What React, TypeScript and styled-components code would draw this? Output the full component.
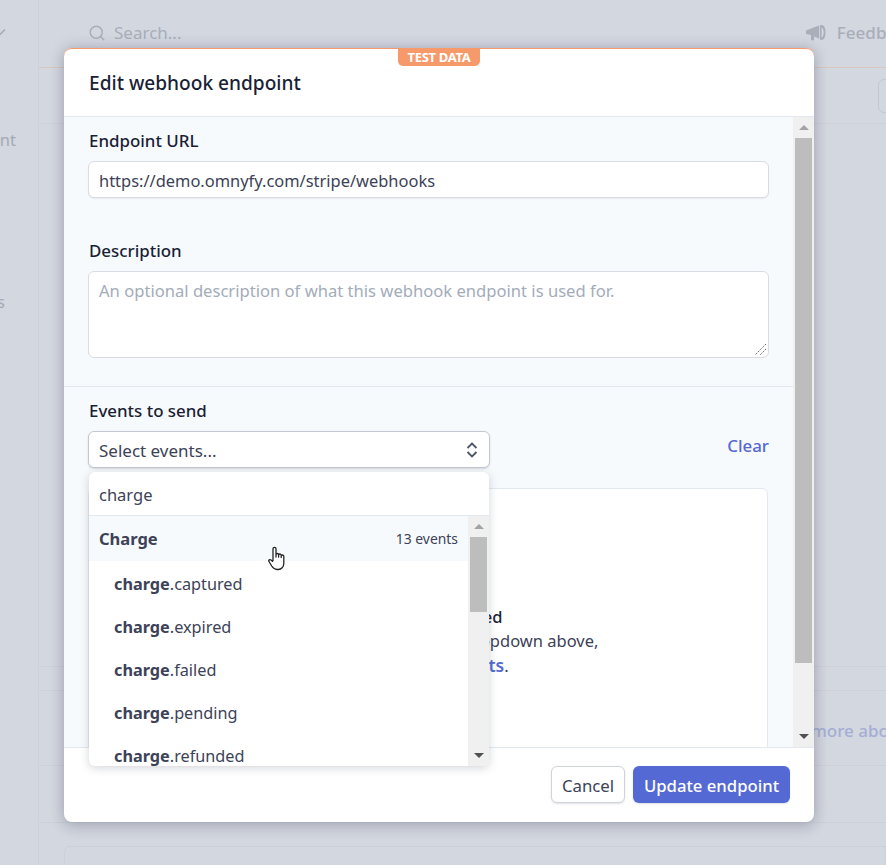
import { Search } from "lucide-react";
import styled, { createGlobalStyle } from "styled-components";

const GlobalStyle = createGlobalStyle`
    html, body {
        margin: 0;
        padding: 0;
        height: 100%;
        overflow: hidden;
        background: #d3d7df;
    }
    * {
        box-sizing: border-box;
    }
    body {
        font-family: "Noto Sans", "Open Sans", sans-serif;
        font-size: 16.5px;
        color: #3c4257;
    }
`

const Page = styled.div`
    position: relative;
    width: 886px;
    height: 865px;
    display: flex;
    overflow: hidden;
    background: #d3d7df;
`

// greyed page behind the dialog
const Sidebar = styled.nav`
    width: 39px;
    flex: none;
    border-right: 1px solid #cdd2da;
    overflow: hidden;
    color: #a5a9b5;
    display: flex;
    flex-direction: column;
    align-items: flex-end;
`
const SideChevron = styled.svg`
    flex: none;
    margin: 28px 32px 0 0;
`
const SideItem = styled.div<{ $top: number; $right: number }>`
    margin-top: ${p => p.$top}px;
    padding-right: ${p => p.$right}px;
    height: 24px;
    line-height: 24px;
    white-space: nowrap;
`
const Main = styled.div`
    flex: 1;
    min-width: 0;
    display: flex;
    flex-direction: column;
`
const TopBar = styled.header`
    height: 68px;
    flex: none;
    border-bottom: 1px solid #d9c6bf;
    display: flex;
    align-items: center;
    justify-content: space-between;
    padding: 0 0 2px 49px;
    color: #a9aeb9;
    font-size: 17px;
    white-space: nowrap;
`
const SearchBox = styled.div`
    display: flex;
    align-items: center;
    gap: 8px;
`
const Feedback = styled.div`
    display: flex;
    align-items: center;
    gap: 11px;
    margin-right: -28px;
    font-weight: 500;
`
const BackRow = styled.div<{ $height: number; $line?: boolean }>`
    height: ${p => p.$height}px;
    flex: none;
    display: flex;
    align-items: center;
    justify-content: flex-end;
    border-bottom: ${p => (p.$line ? "1px solid #cbd0d9" : "none")};
    white-space: nowrap;
    overflow: hidden;
`
const BackButton = styled.div`
    width: 30px;
    height: 34px;
    margin-right: -22px;
    border: 1px solid #c3c8d1;
    border-radius: 6px;
`
const BackLink = styled.span`
    color: #a4aed4;
    font-size: 17px;
    font-weight: 500;
    margin-right: -20px;
    padding-top: 4px;
`
const BackCard = styled.div`
    margin: 23px 0 0 25px;
    height: 40px;
    border: 1px solid #cbd0d9;
    border-bottom: none;
    border-radius: 6px 0 0 0;
    flex: none;
`

// dialog
const Modal = styled.div`
    position: absolute;
    left: 64px;
    top: 48px;
    width: 750px;
    height: 774px;
    background: #fff;
    border-radius: 8px;
    display: flex;
    flex-direction: column;
    box-shadow: 0 0 14px rgba(60, 66, 87, 0.28), 0 7px 14px rgba(60, 66, 87, 0.12);
`
const ModalHeader = styled.div`
    height: 69px;
    flex: none;
    border-top: 1px solid #f79a6b;
    border-bottom: 1px solid #e3e8ee;
    border-radius: 8px 8px 0 0;
    padding: 20px 25px 0;
`
const Title = styled.h1`
    margin: 0;
    font-size: 19.1px;
    line-height: 28px;
    font-weight: 500;
    color: #1a1f36;
`
const TestBadge = styled.div`
    position: absolute;
    top: 0;
    left: 334px;
    width: 82px;
    height: 18px;
    background: #f79a6b;
    border-radius: 0 0 5px 5px;
    color: #fff;
    font-size: 13px;
    font-weight: 700;
    line-height: 18px;
    text-align: center;
    letter-spacing: -0.3px;
`
const ModalBody = styled.div`
    flex: 1;
    min-height: 0;
    display: flex;
    background: #f7fafc;
`
const BodyContent = styled.div`
    flex: 1;
    min-width: 0;
    overflow: hidden;
`
const Section = styled.section<{ $line?: boolean }>`
    padding: 12px 24px ${p => (p.$line ? 28 : 0)}px;
    border-bottom: ${p => (p.$line ? "1px solid #e3e8ee" : "none")};
`
const Label = styled.label<{ $gap?: number }>`
    display: block;
    height: 24px;
    line-height: 24px;
    margin: ${p => p.$gap ?? 0}px 0 8px;
    padding-left: 1px;
    font-size: 16.9px;
    font-weight: 500;
    color: #1a1f36;
`
const TextInput = styled.div`
    height: 37px;
    line-height: 38px;
    padding: 0 10px;
    background: #fff;
    border: 1px solid #d8dce3;
    border-radius: 6px;
    box-shadow: 0 1px 1px rgba(60, 66, 87, 0.08);
    font-size: 16.45px;
`
const TextArea = styled.div`
    position: relative;
    height: 87px;
    padding: 7px 10px;
    line-height: 24px;
    background: #fff;
    border: 1px solid #d8dce3;
    border-radius: 6px;
    color: #a3acb9;
    font-size: 16.6px;
`
const ResizeGrip = styled.svg`
    position: absolute;
    right: 1px;
    bottom: 1px;
`
const SelectRow = styled.div`
    display: flex;
    align-items: flex-start;
    justify-content: space-between;
`
const SelectBox = styled.div`
    width: 402px;
    height: 37px;
    padding: 1px 10px 0 10px;
    display: flex;
    align-items: center;
    justify-content: space-between;
    background: #fff;
    border-radius: 6px;
    border: 1px solid #c3c8d1;
    box-shadow: 0 1px 2px rgba(60, 66, 87, 0.18);
    font-size: 17px;
`
const ClearLink = styled.a`
    margin-top: 3px;
    line-height: 24px;
    color: #5469d4;
    font-size: 16.9px;
    font-weight: 500;
`
const EventsPanel = styled.div`
    height: 320px;
    margin: 20px 1px 0 0;
    padding-top: 116px;
    background: #fff;
    border: 1px solid #e3e8ee;
    border-radius: 6px;
    text-align: center;
    line-height: 24px;
`
const PanelTitle = styled.div`
    font-weight: 500;
    color: #1a1f36;
`
const PanelLine = styled.div`
    font-size: 16.5px;
`
const PanelLink = styled.a`
    color: #5469d4;
    font-size: 17.5px;
    font-weight: 600;
`
const ModalFooter = styled.div`
    height: 75px;
    flex: none;
    border-top: 1px solid #e3e8ee;
    display: flex;
    justify-content: flex-end;
    gap: 8px;
    padding: 18px 24px 0;
`
const Button = styled.button<{ $primary?: boolean }>`
    height: 37px;
    width: ${p => (p.$primary ? 157 : 74)}px;
    padding: 1px 0 0;
    font-family: inherit;
    font-size: ${p => (p.$primary ? 16.7 : 16.8)}px;
    font-weight: ${p => (p.$primary ? 500 : 400)};
    color: ${p => (p.$primary ? "#fff" : "#3c4257")};
    background: ${p => (p.$primary ? "#5469d4" : "#fff")};
    border: ${p => (p.$primary ? "none" : "1px solid #d0d4db")};
    border-radius: 6px;
    box-shadow: 0 1px 2px rgba(60, 66, 87, 0.16);
`

// scrollbars
const Track = styled.div`
    width: 21px;
    flex: none;
    background: #f0f0f0;
    display: flex;
    flex-direction: column;
`
const ArrowSlot = styled.div`
    height: 21px;
    flex: none;
    display: flex;
    align-items: center;
    justify-content: center;
`
const ArrowUp = styled.div`
    border: 5px solid transparent;
    border-top: none;
    border-bottom: 5px solid #a3a3a3;
`
const ArrowDown = styled.div`
    border: 5px solid transparent;
    border-bottom: none;
    border-top: 5px solid #505050;
`
const Thumb = styled.div<{ $height: number }>`
    height: ${p => p.$height}px;
    margin: 0 2px;
    flex: none;
    background: #bdbdbd;
`
const TrackFill = styled.div`
    flex: 1;
`

function Scrollbar({ thumb }: { thumb: number }) {
    return (
        <Track>
            <ArrowSlot><ArrowUp /></ArrowSlot>
            <Thumb $height={thumb} />
            <TrackFill />
            <ArrowSlot><ArrowDown /></ArrowSlot>
        </Track>
    )
}

// dropdown
const Dropdown = styled.div`
    position: absolute;
    left: 25px;
    top: 424px;
    width: 400px;
    height: 294px;
    background: #fff;
    border-radius: 6px;
    display: flex;
    flex-direction: column;
    overflow: hidden;
    box-shadow: 0 2px 10px rgba(60, 66, 87, 0.22);
`
const DropdownSearch = styled.div`
    height: 44px;
    flex: none;
    line-height: 46px;
    padding: 0 10px;
    border-bottom: 1px solid #e3e8ee;
`
const DropdownBody = styled.div`
    flex: 1;
    min-height: 0;
    display: flex;
`
const DropdownList = styled.div`
    flex: 1;
    min-width: 0;
    overflow: hidden;
`
const GroupRow = styled.div`
    height: 45px;
    display: flex;
    align-items: center;
    justify-content: space-between;
    padding: 0 10px;
    background: #f7fafc;
`
const GroupName = styled.strong`
    font-weight: 700;
`
const GroupCount = styled.span`
    font-size: 13.9px;
`
const EventRow = styled.div`
    height: 43px;
    line-height: 46px;
    padding-left: 25px;
    font-size: 16.25px;
`
const Match = styled.b`
    font-weight: 700;
`
const HandCursor = styled.svg`
    position: absolute;
    left: 204px;
    top: 498px;
`

const events = ["captured", "expired", "failed", "pending", "refunded", "succeeded"];

export default function App() {
    return (
        <Page>
            <GlobalStyle />
            <Sidebar>
                <SideChevron width="12" height="8" viewBox="0 0 12 8" fill="none" stroke="#a5a9b5" strokeWidth="1.500">
                    <path d="M1 1.500l5 5 5-5" />
                </SideChevron>
                <SideItem $top={92} $right={22}>Account</SideItem>
                <SideItem $top={138} $right={33}>Webhooks</SideItem>
            </Sidebar>
            <Main>
                <TopBar>
                    <SearchBox>
                        <Search size={18} strokeWidth={2} />
                        <span>Search...</span>
                    </SearchBox>
                    <Feedback>
                        <svg width="20" height="17" viewBox="0 0 20 17" fill="currentColor">
                            <path d="M0 6.500l13-5v13l-5-1.900V15a1.500 1.500 0 0 1-3 0v-4L0 10z" />
                            <path d="M15 1c3.500 0 4.500 3.500 4.500 7.500S18.500 16 15 16c-.8 0-1.200-.6-1.200-1.200V2.200C13.800 1.500 14.200 1 15 1zm.6 2.500v10c1.500-.6 2-2.500 2-5s-.5-4.400-2-5z" />
                        </svg>
                        <span>Feedback</span>
                    </Feedback>
                </TopBar>
                <BackRow $height={56} $line><BackButton /></BackRow>
                <BackRow $height={543} $line />
                <BackRow $height={24} $line />
                <BackRow $height={75} $line><BackLink>more about</BackLink></BackRow>
                <BackRow $height={57} $line />
                <BackCard />
            </Main>

            <Modal>
                <ModalHeader>
                    <Title>Edit webhook endpoint</Title>
                </ModalHeader>
                <TestBadge>TEST DATA</TestBadge>
                <ModalBody>
                    <BodyContent>
                        <Section $line>
                            <Label>Endpoint URL</Label>
                            <TextInput>https://demo.omnyfy.com/stripe/webhooks</TextInput>
                            <Label $gap={41}>Description</Label>
                            <TextArea>
                                An optional description of what this webhook endpoint is used for.
                                <ResizeGrip width="14" height="14" viewBox="0 0 14 14" stroke="#6b6b6b" strokeWidth="1" strokeDasharray="1.500 1">
                                    <path d="M13 2 2 13M13 7 7 13" />
                                </ResizeGrip>
                            </TextArea>
                        </Section>
                        <Section>
                            <Label>Events to send</Label>
                            <SelectRow>
                                <SelectBox>
                                    <span>Select events...</span>
                                    <svg width="14" height="20" viewBox="0 0 14 20" fill="none" stroke="#4f566b" strokeWidth="1.800">
                                        <path d="M2.500 8l4.500-4.500L11.500 8M2.500 12l4.500 4.500 4.500-4.500" />
                                    </svg>
                                </SelectBox>
                                <ClearLink>Clear</ClearLink>
                            </SelectRow>
                            <EventsPanel>
                                <PanelTitle>No events selected</PanelTitle>
                                <PanelLine>Search for events with the dropdown above,</PanelLine>
                                <PanelLine>or <PanelLink>select all events</PanelLink>.</PanelLine>
                            </EventsPanel>
                        </Section>
                    </BodyContent>
                    <Scrollbar thumb={525} />
                </ModalBody>
                <ModalFooter>
                    <Button>Cancel</Button>
                    <Button $primary>Update endpoint</Button>
                </ModalFooter>

                <Dropdown>
                    <DropdownSearch>charge</DropdownSearch>
                    <DropdownBody>
                        <DropdownList>
                            <GroupRow>
                                <GroupName>Charge</GroupName>
                                <GroupCount>13 events</GroupCount>
                            </GroupRow>
                            {events.map(name => (
                                <EventRow key={name}><Match>charge</Match>.{name}</EventRow>
                            ))}
                        </DropdownList>
                        <Scrollbar thumb={75} />
                    </DropdownBody>
                </Dropdown>
                <HandCursor width="18" height="25" viewBox="0 0 18 25" fill="#fff" stroke="#222" strokeWidth="1.300" strokeLinejoin="round">
                    <path d="M5 15V2.800a1.500 1.500 0 0 1 3 0V11V8.800a1.300 1.300 0 0 1 2.600 0V11V9.300a1.300 1.300 0 0 1 2.600 0V11.500V10.300a1.300 1.300 0 0 1 2.600 0V17.500c0 3.500-2.500 6-5.500 6h-1.300c-2.500 0-3.800-1.200-5.300-3.500L1 15.500c-.9-1.300.8-2.500 2-1.500l2 1.700" />
                </HandCursor>
            </Modal>
        </Page>
    )
}
